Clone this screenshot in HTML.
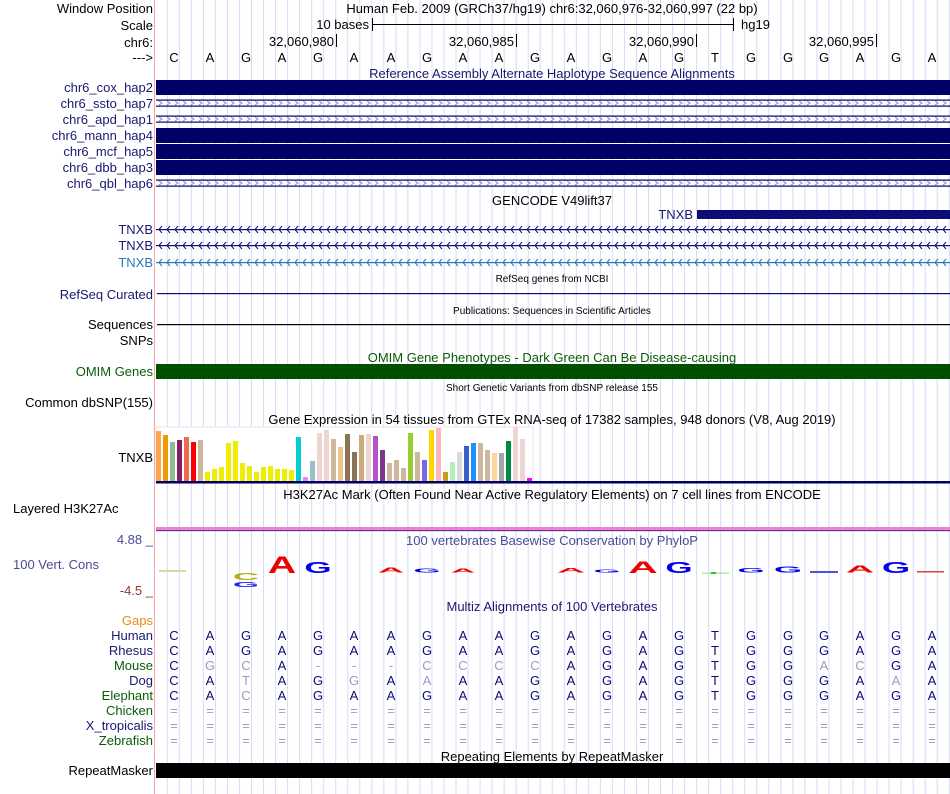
<!DOCTYPE html>
<html><head><meta charset="utf-8"><style>
html,body{margin:0;padding:0;background:#fff;width:950px;height:794px;overflow:hidden}
svg{display:block;font-family:"Liberation Sans",Arial,sans-serif}
</style></head><body>
<svg width="950" height="794" viewBox="0 0 950 794" xmlns="http://www.w3.org/2000/svg" font-size="13">
<defs>
<pattern id="grid" patternUnits="userSpaceOnUse" x="166.8" y="0" width="12.03" height="10">
<rect x="0" y="0" width="1" height="10" fill="#d9d9f7"/></pattern>
<pattern id="chev" patternUnits="userSpaceOnUse" x="157" y="100" width="8" height="6">
<path d="M2,1 L5,3 L2,5" fill="none" stroke="#8a8ac0" stroke-width="1"/></pattern>
<pattern id="larr" patternUnits="userSpaceOnUse" x="157" y="0" width="8" height="800">
<path d="M5,226 L2,229.5 L5,233 M5,242 L2,245.5 L5,249" fill="none" stroke="#0c0c78" stroke-width="1"/>
<path d="M5,259 L2,262.5 L5,266" fill="none" stroke="#1f7ab8" stroke-width="1"/></pattern>
</defs>
<rect x="156" y="0" width="794" height="794" fill="url(#grid)"/>
<rect x="154" y="0" width="1" height="794" fill="#f6a8a8"/>

<g text-anchor="end">
<text x="153" y="13">Window Position</text>
<text x="153" y="30">Scale</text>
<text x="153" y="47">chr6:</text>
<text x="153" y="62">---&gt;</text>
<g fill="#191970">
<text x="153" y="92">chr6_cox_hap2</text>
<text x="153" y="108">chr6_ssto_hap7</text>
<text x="153" y="124">chr6_apd_hap1</text>
<text x="153" y="140">chr6_mann_hap4</text>
<text x="153" y="156">chr6_mcf_hap5</text>
<text x="153" y="172">chr6_dbb_hap3</text>
<text x="153" y="188">chr6_qbl_hap6</text>
<text x="153" y="234">TNXB</text>
<text x="153" y="250">TNXB</text>
<text x="153" y="299">RefSeq Curated</text>
</g>
<text x="153" y="267" fill="#1f7ab8">TNXB</text>
<text x="153" y="329">Sequences</text>
<text x="153" y="345">SNPs</text>
<text x="153" y="376" fill="#0a5c0a">OMIM Genes</text>
<text x="153" y="407">Common dbSNP(155)</text>
<text x="153" y="462">TNXB</text>
<text x="153" y="544" fill="#4a4a96">4.88 _</text>
<text x="153" y="595" fill="#8b3a3a">-4.5 _</text>
<text x="153" y="625" fill="#e8900c">Gaps</text>
<text x="153" y="640" fill="#191970">Human</text>
<text x="153" y="655" fill="#191970">Rhesus</text>
<text x="153" y="670" fill="#0a5c0a">Mouse</text>
<text x="153" y="685" fill="#191970">Dog</text>
<text x="153" y="700" fill="#0a5c0a">Elephant</text>
<text x="153" y="715" fill="#0a5c0a">Chicken</text>
<text x="153" y="730" fill="#191970">X_tropicalis</text>
<text x="153" y="745" fill="#0a5c0a">Zebrafish</text>
<text x="153" y="775">RepeatMasker</text>
</g>
<text x="13" y="513">Layered H3K27Ac</text>
<text x="13" y="569" fill="#4a4a96">100 Vert. Cons</text>

<text x="552" y="13" text-anchor="middle">Human Feb. 2009 (GRCh37/hg19)   chr6:32,060,976-32,060,997 (22 bp)</text>
<text x="369" y="29" text-anchor="end">10 bases</text>
<rect x="372" y="18" width="1" height="13" fill="#000"/>
<rect x="372" y="24" width="361" height="1" fill="#000"/>
<rect x="733" y="18" width="1" height="13" fill="#000"/>
<text x="741" y="29">hg19</text>
<g text-anchor="end">
<text x="334" y="46">32,060,980</text><text x="514" y="46">32,060,985</text>
<text x="694" y="46">32,060,990</text><text x="874" y="46">32,060,995</text>
</g>
<rect x="336" y="34" width="1" height="13" fill="#000"/><rect x="516" y="34" width="1" height="13" fill="#000"/>
<rect x="696" y="34" width="1" height="13" fill="#000"/><rect x="876" y="34" width="1" height="13" fill="#000"/>
<text y="62" text-anchor="middle" x="174 210 246 282 318 354 391 427 463 499 535 571 607 643 679 715 751 788 824 860 896 932">CAGAGAAGAAGAGAGTGGGAGA</text>

<text x="552" y="78" text-anchor="middle" fill="#191970">Reference Assembly Alternate Haplotype Sequence Alignments</text>
<g fill="#000066">
<rect x="156" y="80" width="794" height="15"/>
<rect x="156" y="128" width="794" height="15"/>
<rect x="156" y="144" width="794" height="15"/>
<rect x="156" y="160" width="794" height="15"/>
<rect x="156" y="99.5" width="794" height="1.2"/><rect x="156" y="105.5" width="794" height="1.2"/>
<rect x="156" y="115.5" width="794" height="1.2"/><rect x="156" y="121.5" width="794" height="1.2"/>
<rect x="156" y="179.5" width="794" height="1.2"/><rect x="156" y="185.5" width="794" height="1.2"/>
</g>
<rect x="156" y="100" width="794" height="6" fill="url(#chev)"/>
<g transform="translate(0,16)"><rect x="156" y="100" width="794" height="6" fill="url(#chev)"/></g>
<g transform="translate(0,80)"><rect x="156" y="100" width="794" height="6" fill="url(#chev)"/></g>

<text x="552" y="205" text-anchor="middle">GENCODE V49lift37</text>
<text x="693" y="219" text-anchor="end" fill="#191970">TNXB</text>
<rect x="697" y="210" width="253" height="9" fill="#0c0c78"/>
<rect x="156" y="229" width="794" height="1.2" fill="#0c0c78"/>
<rect x="156" y="245" width="794" height="1.2" fill="#0c0c78"/>
<rect x="156" y="262" width="794" height="1.2" fill="#1f7ab8"/>
<rect x="156" y="222" width="794" height="48" fill="url(#larr)"/>

<text x="552" y="282" text-anchor="middle" font-size="10">RefSeq genes from NCBI</text>
<rect x="157" y="293" width="793" height="1.2" fill="#0c0c78"/>
<text x="552" y="314" text-anchor="middle" font-size="10">Publications: Sequences in Scientific Articles</text>
<rect x="157" y="324" width="793" height="1.2" fill="#000"/>
<text x="552" y="362" text-anchor="middle" fill="#0a5c0a">OMIM Gene Phenotypes - Dark Green Can Be Disease-causing</text>
<rect x="156" y="364" width="794" height="15" fill="#005000"/>
<text x="552" y="391" text-anchor="middle" font-size="10">Short Genetic Variants from dbSNP release 155</text>
<text x="552" y="424" text-anchor="middle">Gene Expression in 54 tissues from GTEx RNA-seq of 17382 samples, 948 donors (V8, Aug 2019)</text>

<rect x="156" y="427" width="377" height="55" fill="#fff" stroke="#e6e6e6" stroke-width="1"/>
<g>
<rect x="156" y="431" width="5" height="51" fill="#FFA54F"/>
<rect x="163" y="435" width="5" height="47" fill="#EE9A00"/>
<rect x="170" y="442" width="5" height="40" fill="#8FBC8F"/>
<rect x="177" y="440" width="5" height="42" fill="#8B1C62"/>
<rect x="184" y="437" width="5" height="45" fill="#EE6A50"/>
<rect x="191" y="442" width="5" height="40" fill="#FF0000"/>
<rect x="198" y="440" width="5" height="42" fill="#CDB79E"/>
<rect x="205" y="472" width="5" height="10" fill="#EEEE00"/>
<rect x="212" y="469" width="5" height="13" fill="#EEEE00"/>
<rect x="219" y="467" width="5" height="15" fill="#EEEE00"/>
<rect x="226" y="443" width="5" height="39" fill="#EEEE00"/>
<rect x="233" y="441" width="5" height="41" fill="#EEEE00"/>
<rect x="240" y="463" width="5" height="19" fill="#EEEE00"/>
<rect x="247" y="466" width="5" height="16" fill="#EEEE00"/>
<rect x="254" y="472" width="5" height="10" fill="#EEEE00"/>
<rect x="261" y="467" width="5" height="15" fill="#EEEE00"/>
<rect x="268" y="466" width="5" height="16" fill="#EEEE00"/>
<rect x="275" y="469" width="5" height="13" fill="#EEEE00"/>
<rect x="282" y="469" width="5" height="13" fill="#EEEE00"/>
<rect x="289" y="470" width="5" height="12" fill="#EEEE00"/>
<rect x="296" y="437" width="5" height="45" fill="#00CED1"/>
<rect x="303" y="477" width="5" height="5" fill="#EE82EE"/>
<rect x="310" y="461" width="5" height="21" fill="#9AC0CD"/>
<rect x="317" y="433" width="5" height="49" fill="#EED5D2"/>
<rect x="324" y="430" width="5" height="52" fill="#EED5D2"/>
<rect x="331" y="439" width="5" height="43" fill="#CDB79E"/>
<rect x="338" y="447" width="5" height="35" fill="#EEC591"/>
<rect x="345" y="434" width="5" height="48" fill="#8B7355"/>
<rect x="352" y="452" width="5" height="30" fill="#8B7355"/>
<rect x="359" y="435" width="5" height="47" fill="#CDAA7D"/>
<rect x="366" y="434" width="5" height="48" fill="#EED5D2"/>
<rect x="373" y="436" width="5" height="46" fill="#B452CD"/>
<rect x="380" y="450" width="5" height="32" fill="#7A378B"/>
<rect x="387" y="463" width="5" height="19" fill="#CDB79E"/>
<rect x="394" y="460" width="5" height="22" fill="#CDB79E"/>
<rect x="401" y="468" width="5" height="14" fill="#CDB79E"/>
<rect x="408" y="433" width="5" height="49" fill="#9ACD32"/>
<rect x="415" y="452" width="5" height="30" fill="#CDB79E"/>
<rect x="422" y="460" width="5" height="22" fill="#7A67EE"/>
<rect x="429" y="430" width="5" height="52" fill="#FFD700"/>
<rect x="436" y="428" width="5" height="54" fill="#FFB6C1"/>
<rect x="443" y="472" width="5" height="10" fill="#CD9B1D"/>
<rect x="450" y="462" width="5" height="20" fill="#B4EEB4"/>
<rect x="457" y="452" width="5" height="30" fill="#D9D9D9"/>
<rect x="464" y="446" width="5" height="36" fill="#3A5FCD"/>
<rect x="471" y="443" width="5" height="39" fill="#1E90FF"/>
<rect x="478" y="443" width="5" height="39" fill="#CDB79E"/>
<rect x="485" y="450" width="5" height="32" fill="#CDB79E"/>
<rect x="492" y="453" width="5" height="29" fill="#FFD39B"/>
<rect x="499" y="453" width="5" height="29" fill="#A6A6A6"/>
<rect x="506" y="441" width="5" height="41" fill="#008B45"/>
<rect x="513" y="427" width="5" height="55" fill="#EED5D2"/>
<rect x="520" y="439" width="5" height="43" fill="#EED5D2"/>
<rect x="527" y="478" width="5" height="4" fill="#FF00FF"/>
</g>
<rect x="156" y="481" width="794" height="2.5" fill="#000066"/>

<text x="552" y="499" text-anchor="middle">H3K27Ac Mark (Often Found Near Active Regulatory Elements) on 7 cell lines from ENCODE</text>
<rect x="156" y="527" width="794" height="3" fill="#f57fcf"/>
<rect x="156" y="530" width="794" height="1.2" fill="#5a3a9a"/>

<text x="552" y="545" text-anchor="middle" fill="#4a4a96">100 vertebrates Basewise Conservation by PhyloP</text>

<g font-size="14" text-anchor="middle" font-weight="bold">
<rect x="159" y="570" width="27" height="2" fill="#d8d8a0"/>
<text transform="translate(246,580) scale(2.6,0.7)" fill="#b0b020">C</text>
<text transform="translate(246,587) scale(2.4,0.5)" fill="#2020ee">G</text>
<text transform="translate(282,573) scale(2.8,1.7)" fill="#ee0000">A</text>
<text transform="translate(318,573) scale(2.5,1.1)" fill="#0000ee">G</text>
<text transform="translate(391,572.5) scale(2.6,0.5)" fill="#ee0000">A</text>
<text transform="translate(427,572.5) scale(2.5,0.4)" fill="#0000ee">G</text>
<text transform="translate(463,572.5) scale(2.4,0.4)" fill="#ee0000">A</text>
<text transform="translate(571,572.5) scale(2.8,0.45)" fill="#ee0000">A</text>
<text transform="translate(607,572.5) scale(2.5,0.35)" fill="#0000ee">G</text>
<text transform="translate(643,573) scale(2.9,1.2)" fill="#ee0000">A</text>
<text transform="translate(679,573) scale(2.5,1.1)" fill="#0000ee">G</text>
<rect x="702" y="572.5" width="27" height="1.2" fill="#a0e0a0"/><rect x="711" y="572" width="5" height="2" fill="#22cc22"/>
<text transform="translate(751,572.5) scale(2.5,0.45)" fill="#0000ee">G</text>
<text transform="translate(788,572.5) scale(2.6,0.6)" fill="#0000ee">G</text>
<rect x="810" y="571" width="28" height="2" fill="#5050e0"/>
<text transform="translate(860,572.5) scale(2.8,0.7)" fill="#ee0000">A</text>
<text transform="translate(896,573) scale(2.6,1.1)" fill="#0000ee">G</text>
<rect x="917" y="571" width="27" height="1.5" fill="#e04040"/>
</g>

<text x="552" y="611" text-anchor="middle" fill="#191970">Multiz Alignments of 100 Vertebrates</text>
<g text-anchor="middle" fill="#0c0c78">
<text y="640" x="174 210 246 282 318 354 391 427 463 499 535 571 607 643 679 715 751 788 824 860 896 932">CAGAGAAGAAGAGAGTGGGAGA</text>
<text y="655" x="174 210 246 282 318 354 391 427 463 499 535 571 607 643 679 715 751 788 824 860 896 932">CAGAGAAGAAGAGAGTGGGAGA</text>
<text y="670"><tspan x="174">C</tspan><tspan x="210" fill="#9a9ac8">G</tspan><tspan x="246" fill="#9a9ac8">C</tspan><tspan x="282">A</tspan><tspan x="318" fill="#9a9ac8">-</tspan><tspan x="354" fill="#9a9ac8">-</tspan><tspan x="391" fill="#9a9ac8">-</tspan><tspan x="427" fill="#9a9ac8">C</tspan><tspan x="463" fill="#9a9ac8">C</tspan><tspan x="499" fill="#9a9ac8">C</tspan><tspan x="535" fill="#9a9ac8">C</tspan><tspan x="571">A</tspan><tspan x="607">G</tspan><tspan x="643">A</tspan><tspan x="679">G</tspan><tspan x="715">T</tspan><tspan x="751">G</tspan><tspan x="788">G</tspan><tspan x="824" fill="#9a9ac8">A</tspan><tspan x="860" fill="#9a9ac8">C</tspan><tspan x="896">G</tspan><tspan x="932">A</tspan></text>
<text y="685"><tspan x="174">C</tspan><tspan x="210">A</tspan><tspan x="246" fill="#9a9ac8">T</tspan><tspan x="282">A</tspan><tspan x="318">G</tspan><tspan x="354" fill="#9a9ac8">G</tspan><tspan x="391">A</tspan><tspan x="427" fill="#9a9ac8">A</tspan><tspan x="463">A</tspan><tspan x="499">A</tspan><tspan x="535">G</tspan><tspan x="571">A</tspan><tspan x="607">G</tspan><tspan x="643">A</tspan><tspan x="679">G</tspan><tspan x="715">T</tspan><tspan x="751">G</tspan><tspan x="788">G</tspan><tspan x="824">G</tspan><tspan x="860">A</tspan><tspan x="896" fill="#9a9ac8">A</tspan><tspan x="932">A</tspan></text>
<text y="700"><tspan x="174">C</tspan><tspan x="210">A</tspan><tspan x="246" fill="#9a9ac8">C</tspan><tspan x="282 318 354 391 427 463 499 535 571 607 643 679 715 751 788 824 860 896 932">AGAAGAAGAGAGTGGGAGA</tspan></text>
<g fill="#9a9ac8">
<text y="715" x="174 210 246 282 318 354 391 427 463 499 535 571 607 643 679 715 751 788 824 860 896 932">======================</text>
<text y="730" x="174 210 246 282 318 354 391 427 463 499 535 571 607 643 679 715 751 788 824 860 896 932">======================</text>
<text y="745" x="174 210 246 282 318 354 391 427 463 499 535 571 607 643 679 715 751 788 824 860 896 932">======================</text>
</g>
</g>

<text x="552" y="761" text-anchor="middle">Repeating Elements by RepeatMasker</text>
<rect x="156" y="763" width="794" height="15" fill="#000"/>
</svg>
</body></html>
